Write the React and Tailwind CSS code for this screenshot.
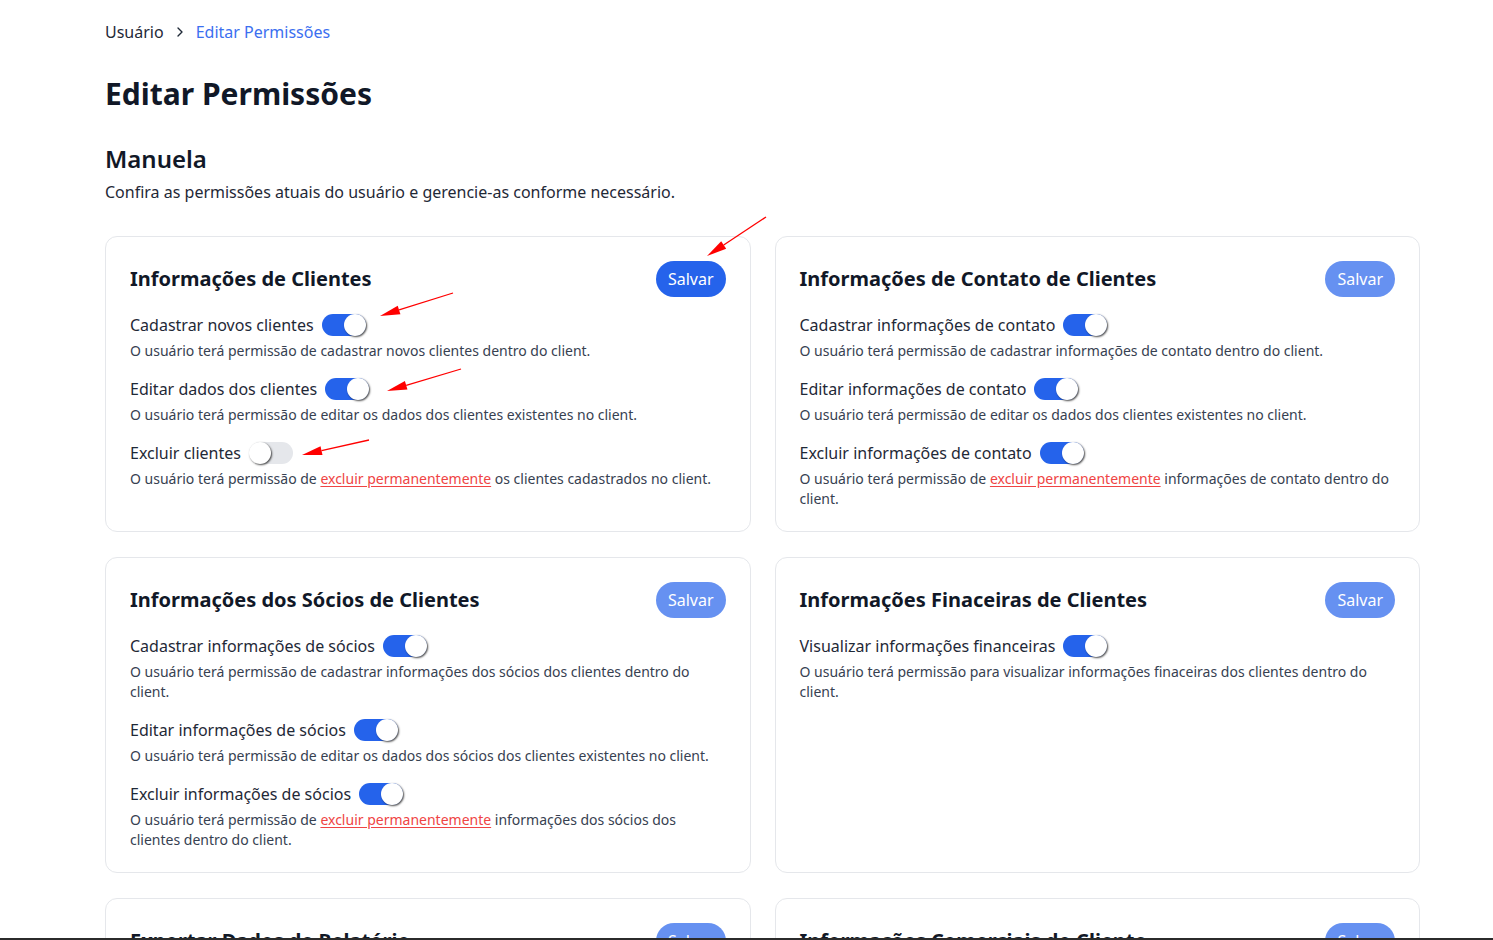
import React from 'react';
import { ChevronRight } from 'lucide-react';

// red annotation arrows drawn over the screenshot
const arrows = [
  [766, 217, 707, 256],
  [453, 293, 380, 316],
  [461, 369, 387, 391],
  [369, 440, 302, 455],
];

function Arrow({ x1, y1, x2, y2 }) {
  const dx = x2 - x1;
  const dy = y2 - y1;
  const len = Math.hypot(dx, dy);
  const ux = dx / len;
  const uy = dy / len;
  const bx = x2 - ux * 20;
  const by = y2 - uy * 20;
  const nx = -uy * 4.5;
  const ny = ux * 4.5;
  return (
    <g>
      <line x1={x1} y1={y1} x2={bx} y2={by} stroke="#ff0000" strokeWidth="1.3" />
      <polygon points={`${x2},${y2} ${bx + nx},${by + ny} ${bx - nx},${by - ny}`} fill="#ff0000" />
    </g>
  );
}

function Toggle({ on }) {
  return (
    <span
      className={`inline-flex h-[22px] w-[44px] items-center rounded-full ${on ? 'bg-[#2563eb] justify-end' : 'bg-[#e5e7eb] justify-start'}`}
    >
      <span className="h-[22px] w-[22px] rounded-full bg-white shadow-[1px_1px_2px_rgba(0,0,0,0.7)]" />
    </span>
  );
}

const Danger = () => (
  <span className="text-[#ef4444] underline underline-offset-2">excluir permanentemente</span>
);

function PermissionCard({ title, active, items }) {
  return (
    <div className="rounded-xl border border-[#e5e7eb] bg-white px-6 pt-6 pb-[22px]">
      <div className="flex items-center justify-between">
        <h3 className="text-xl font-bold text-[#111827]">{title}</h3>
        <button
          className={`h-9 rounded-full px-3 text-base text-white ${active ? 'bg-[#2563eb]' : 'bg-[#2563eb]/70'}`}
        >
          Salvar
        </button>
      </div>
      <div className="mt-4 flex flex-col gap-4">
        {items.map((it) => (
          <div key={it.label}>
            <div className="flex h-6 items-center gap-2 text-base text-[#1f2937]">
              <span>{it.label}</span>
              <Toggle on={it.on} />
            </div>
            <p className="mt-1 text-sm text-[#374151]">{it.desc}</p>
          </div>
        ))}
      </div>
    </div>
  );
}

const cards = [
  {
    title: 'Informações de Clientes',
    active: true,
    items: [
      { label: 'Cadastrar novos clientes', on: true, desc: 'O usuário terá permissão de cadastrar novos clientes dentro do client.' },
      { label: 'Editar dados dos clientes', on: true, desc: 'O usuário terá permissão de editar os dados dos clientes existentes no client.' },
      { label: 'Excluir clientes', on: false, desc: <>O usuário terá permissão de <Danger /> os clientes cadastrados no client.</> },
    ],
  },
  {
    title: 'Informações de Contato de Clientes',
    items: [
      { label: 'Cadastrar informações de contato', on: true, desc: 'O usuário terá permissão de cadastrar informações de contato dentro do client.' },
      { label: 'Editar informações de contato', on: true, desc: 'O usuário terá permissão de editar os dados dos clientes existentes no client.' },
      { label: 'Excluir informações de contato', on: true, desc: <>O usuário terá permissão de <Danger /> informações de contato dentro do client.</> },
    ],
  },
  {
    title: 'Informações dos Sócios de Clientes',
    items: [
      { label: 'Cadastrar informações de sócios', on: true, desc: 'O usuário terá permissão de cadastrar informações dos sócios dos clientes dentro do client.' },
      { label: 'Editar informações de sócios', on: true, desc: 'O usuário terá permissão de editar os dados dos sócios dos clientes existentes no client.' },
      { label: 'Excluir informações de sócios', on: true, desc: <>O usuário terá permissão de <Danger /> informações dos sócios dos clientes dentro do client.</> },
    ],
  },
  {
    title: 'Informações Finaceiras de Clientes',
    items: [
      { label: 'Visualizar informações financeiras', on: true, desc: 'O usuário terá permissão para visualizar informações finaceiras dos clientes dentro do client.' },
    ],
  },
  {
    title: 'Exportar Dados de Relatório',
    items: [
      { label: 'Exportar relatórios', on: true, desc: 'O usuário terá permissão de exportar os dados dos relatórios do client.' },
    ],
  },
  {
    title: 'Informações Comerciais do Cliente',
    items: [
      { label: 'Visualizar informações comerciais', on: true, desc: 'O usuário terá permissão de visualizar informações comerciais dos clientes dentro do client.' },
    ],
  },
];

export default function App() {
  return (
    <div className="relative min-h-screen bg-white font-['Noto_Sans',sans-serif] text-[#111827]">
      <div className="pl-[105px] pr-[73px] pt-5 pb-10">
        <nav className="flex items-center gap-2 text-base">
          <span className="text-[#1f2937]">Usuário</span>
          <ChevronRight size={16} strokeWidth={2} className="text-[#1f2937]" />
          <span className="text-[#3b6ff0]">Editar Permissões</span>
        </nav>

        <h1 className="mt-8 text-3xl font-bold leading-9 text-[#111827]">Editar Permissões</h1>

        <h2 className="mt-[31px] text-2xl font-semibold leading-8 text-[#111827]">Manuela</h2>
        <p className="mt-[5px] text-base text-[#1f2937]">
          Confira as permissões atuais do usuário e gerencie-as conforme necessário.
        </p>

        <div className="mt-8 grid grid-cols-2 gap-x-6 gap-y-[25px]">
          {cards.map((c) => (
            <PermissionCard key={c.title} {...c} />
          ))}
        </div>
      </div>

      <svg className="pointer-events-none absolute left-0 top-0 h-[940px] w-[1493px]">
        {arrows.map(([x1, y1, x2, y2], i) => (
          <Arrow key={i} x1={x1} y1={y1} x2={x2} y2={y2} />
        ))}
      </svg>

      <div className="fixed inset-x-0 bottom-0 h-[2px] bg-[#2b2b2b]" />
    </div>
  );
}
